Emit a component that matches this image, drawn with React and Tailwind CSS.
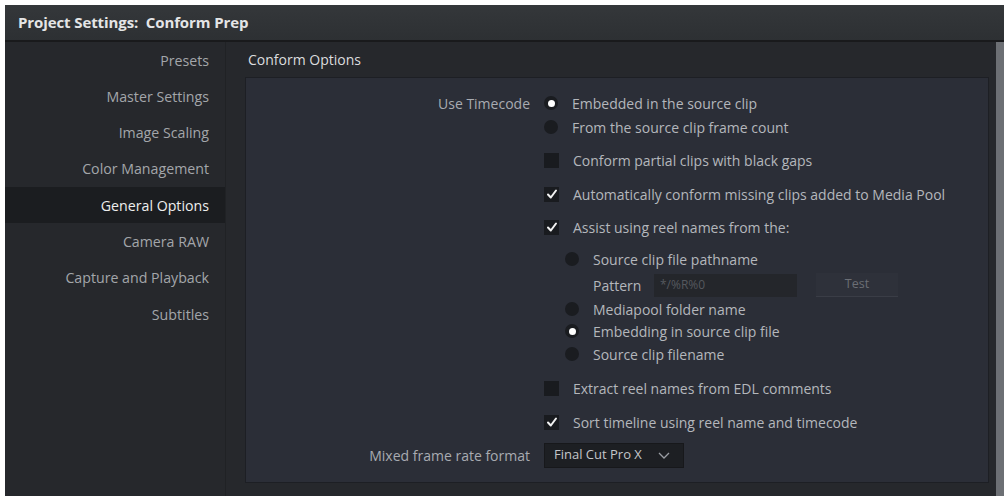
import React from 'react';

// sidebar pages
const PAGES = [
  'Presets',
  'Master Settings',
  'Image Scaling',
  'Color Management',
  'General Options',
  'Camera RAW',
  'Capture and Playback',
  'Subtitles',
];

const Radio = ({ on }) => (
  <span className="w-[14px] h-[14px] rounded-full bg-[#1a1c20] flex items-center justify-center shrink-0">
    {on && <span className="w-[7px] h-[7px] rounded-full bg-white" />}
  </span>
);

const Check = ({ on }) => (
  <span className="w-[15px] h-[15px] bg-[#191b1f] flex items-center justify-center shrink-0">
    {on && (
      <svg width="12" height="12" viewBox="0 0 12 12">
        <path d="M2 6.5 L4.8 9.5 L10 2.5" fill="none" stroke="#f2f2f2" strokeWidth="2" strokeLinecap="round" strokeLinejoin="round" />
      </svg>
    )}
  </span>
);

// one row inside the panel: label column + control
const Row = ({ label, mt, h = 22, indent = false, children }) => (
  <div className="flex items-center" style={{ marginTop: mt, height: h }}>
    <div className="w-[284px] text-right text-[#a8abb1] shrink-0 whitespace-nowrap">{label}</div>
    <div className={`flex items-center ${indent ? 'ml-[35px]' : 'ml-[14px]'}`}>{children}</div>
  </div>
);

const Opt = ({ children }) => <span className="ml-[14px] text-[#b4b7bc] whitespace-nowrap">{children}</span>;

export default function App() {
  return (
    <div className="w-[1004px] h-[498px] bg-white pt-[5px] pl-[5px] overflow-hidden" style={{ fontFamily: '"Open Sans", "Liberation Sans", sans-serif' }}>
      <div className="w-[999px] h-[491px] flex flex-col bg-[#26282c]">
        {/* title bar */}
        <div className="h-[37px] shrink-0 bg-gradient-to-b from-[#34373a] to-[#2d3033] border-b-2 border-[#191a1c] flex items-center pl-[13px]">
          <span className="text-[15px] font-bold text-[#e4e5e6] tracking-[-0.1px]">Project Settings:&nbsp; Conform Prep</span>
        </div>

        <div className="flex flex-1 min-h-0">
          {/* sidebar */}
          <div className="w-[220px] shrink-0 flex flex-col">
            {PAGES.map((p) => (
              <div
                key={p}
                className={`h-[36.3px] flex items-center justify-end pr-[16px] text-[14.2px] whitespace-nowrap ${
                  p === 'General Options' ? 'bg-[#1b1d20] text-[#eeeeee]' : 'text-[#a3a6aa]'
                }`}
              >
                {p}
              </div>
            ))}
          </div>

          {/* content */}
          <div className="flex-1 flex flex-col pl-[19px] pr-[7px] pb-[13px] border-l border-[#202225]">
            <div className="h-[35px] flex items-center pl-[3px] text-[14px] font-medium text-[#dcdddf]">Conform Options</div>
            <div className="flex-1 bg-[#2b2e37] border border-[#1d1f24] pt-[14px] text-[14px]">
              <Row label="Use Timecode" mt={0}>
                <Radio on />
                <Opt>Embedded in the source clip</Opt>
              </Row>
              <Row mt={2}>
                <Radio />
                <Opt>From the source clip frame count</Opt>
              </Row>
              <Row mt={11}>
                <Check />
                <Opt>Conform partial clips with black gaps</Opt>
              </Row>
              <Row mt={12}>
                <Check on />
                <Opt>Automatically conform missing clips added to Media Pool</Opt>
              </Row>
              <Row mt={11}>
                <Check on />
                <Opt>Assist using reel names from the:</Opt>
              </Row>
              <Row mt={10} indent>
                <Radio />
                <Opt>Source clip file pathname</Opt>
              </Row>
              <Row mt={3} h={24} indent>
                <span className="ml-[28px] w-[61px] text-[#b4b7bc]">Pattern</span>
                <span className="w-[143px] h-[23px] bg-[#24262b] flex items-center pl-[6px] text-[12px] text-[#55585e]">*/%R%0</span>
                <span className="ml-[19px] w-[82px] h-[24px] bg-[#2e313a] border-b border-[#3a3d46] flex items-center justify-center text-[12.5px] text-[#6b6e75]">Test</span>
              </Row>
              <Row mt={1} indent>
                <Radio />
                <Opt>Mediapool folder name</Opt>
              </Row>
              <Row mt={0} indent>
                <Radio on />
                <Opt>Embedding in source clip file</Opt>
              </Row>
              <Row mt={1} indent>
                <Radio />
                <Opt>Source clip filename</Opt>
              </Row>
              <Row mt={12}>
                <Check />
                <Opt>Extract reel names from EDL comments</Opt>
              </Row>
              <Row mt={12}>
                <Check on />
                <Opt>Sort timeline using reel name and timecode</Opt>
              </Row>
              <Row label="Mixed frame rate format" mt={9} h={26}>
                <span className="w-[140px] h-[25px] bg-[#1d1f23] border border-[#17181b] flex items-center pl-[9px] text-[13px] text-[#c4c6ca] whitespace-nowrap">
                  Final Cut Pro X
                  <svg className="ml-[16px]" width="12" height="7" viewBox="0 0 12 7">
                    <path d="M1 1 L6 6 L11 1" fill="none" stroke="#9a9da3" strokeWidth="1.3" />
                  </svg>
                </span>
              </Row>
            </div>
          </div>
          <div className="w-[8px] shrink-0 bg-[#6c6f74]" />
        </div>
      </div>
    </div>
  );
}
